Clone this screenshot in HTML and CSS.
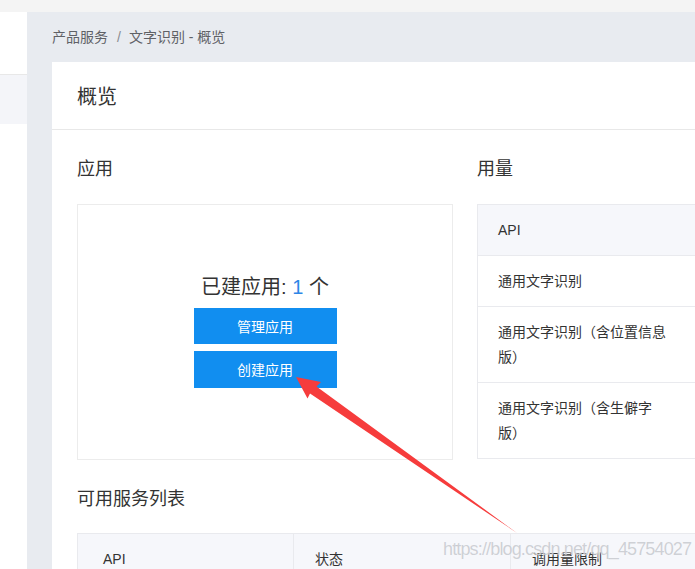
FILE: index.html
```html
<!DOCTYPE html>
<html lang="zh-CN">
<head>
<meta charset="utf-8">
<title>文字识别 - 概览</title>
<link rel="stylesheet" href="styles.css">
</head>
<body>
<div class="topbar"></div>
<div class="layout">
  <aside class="sidebar">
    <div class="side-top"></div>
    <div class="side-item"></div>
  </aside>
  <main class="main">
    <div class="breadcrumb"><span>产品服务</span><span class="sep">/</span><span>文字识别 - 概览</span></div>
    <section class="card">
      <div class="card-head">概览</div>
      <div class="card-body">
        <div class="cols">
          <div class="col">
            <h3 class="sec-title">应用</h3>
            <div class="app-box">
              <div class="app-count">已建应用: <span class="num">1</span> 个</div>
              <button class="btn">管理应用</button>
              <button class="btn">创建应用</button>
            </div>
          </div>
          <div class="col">
            <h3 class="sec-title">用量</h3>
            <table class="usage">
              <tr class="head"><td class="c1">API</td><td class="c2">调用量</td></tr>
              <tr><td class="c1">通用文字识别</td><td class="c2"></td></tr>
              <tr><td class="c1">通用文字识别（含位置信息版）</td><td class="c2"></td></tr>
              <tr><td class="c1">通用文字识别（含生僻字版）</td><td class="c2"></td></tr>
            </table>
          </div>
        </div>
        <h3 class="sec-title list-title">可用服务列表</h3>
        <table class="svc">
          <tr class="head"><td class="s1">API</td><td class="s2">状态</td><td class="s3">调用量限制</td><td class="s4"></td></tr>
        </table>
      </div>
    </section>
  </main>
</div>
<svg class="arrow" width="695" height="569" viewBox="0 0 695 569">
  <polygon points="296,377 321,382 316.5,386.5 517,533 310,393.5 307.5,398.5" fill="#f63c3c"/>
</svg>
<div class="watermark">https://blog.csdn.net/qq_45754027</div>
</body>
</html>
```
FILE: styles.css
```css
html, body {
  margin: 0;
  padding: 0;
  width: 695px;
  height: 569px;
  overflow: hidden;
}
body {
  position: relative;
  background: #ffffff;
  font-family: "Liberation Sans", "Noto Sans CJK SC", sans-serif;
  color: #333333;
  text-spacing-trim: space-all;
}
.topbar {
  height: 12px;
  background: #f4f4f4;
}
.layout {
  display: flex;
  height: 557px;
}
.sidebar {
  flex: none;
  width: 27px;
  background: #ffffff;
}
.side-top {
  height: 62px;
  border-bottom: 1px solid #e8e8e8;
}
.side-item {
  height: 49px;
  background: #f4f5f9;
}
.main {
  flex: none;
  width: 900px;
  background: #e8ebf0;
  padding-left: 25px;
}
.breadcrumb {
  height: 50px;
  line-height: 50px;
  font-size: 14px;
  color: #5f6166;
}
.breadcrumb .sep {
  margin: 0 8px 0 9px;
  color: #8a8c90;
}
.card {
  width: 860px;
  height: 520px;
  background: #ffffff;
}
.card-head {
  height: 65px;
  line-height: 67px;
  padding-top: 2px;
  border-bottom: 1px solid #e8e8e8;
  padding-left: 25px;
  font-size: 20px;
  color: #333333;
}
.card-body {
  padding: 0 25px;
}
.cols {
  display: flex;
  gap: 24px;
}
.col {
  width: 376px;
  flex: none;
}
.sec-title {
  margin: 24px 0 22px;
  padding-top: 2px;
  font-size: 18px;
  line-height: 26px;
  font-weight: normal;
  color: #333333;
}
.list-title {
  margin-bottom: 21px;
}
.app-box {
  box-sizing: border-box;
  height: 256px;
  border: 1px solid #ececec;
  display: flex;
  flex-direction: column;
  align-items: center;
  justify-content: center;
  padding-bottom: 4px;
}
.app-count {
  font-size: 20px;
  line-height: 28px;
  color: #333333;
  margin-bottom: 7px;
}
.app-count .num {
  color: #2d86e6;
}
.btn {
  width: 143px;
  height: 36px;
  border: none;
  background: #118ef0;
  color: #ffffff;
  font-family: "Noto Sans CJK SC", sans-serif;
  font-size: 14px;
  padding: 0;
  margin-bottom: 7px;
}
.btn:last-child {
  height: 37px;
  margin-bottom: 0;
}
table {
  border-collapse: collapse;
  table-layout: fixed;
}
td {
  border: 1px solid #e9eaee;
  font-size: 14px;
  line-height: 25px;
  color: #333333;
  vertical-align: top;
}
.head td {
  background: #f6f7fb;
}
.usage {
  width: 430px;
}
.usage td {
  padding: 13px 21px 12px 20px;
}
.usage .c1 {
  width: 176px;
}
.usage .c2 {
  width: 170px;
}
.svc {
  width: 860px;
}
.svc td {
  padding: 13px 21px 12px 21px;
}
.svc .s1 {
  width: 169px;
  padding-left: 25px;
}
.svc .s2 {
  width: 174px;
}
.svc .s3 {
  width: 174px;
}
.arrow {
  position: absolute;
  left: 0;
  top: 0;
  pointer-events: none;
}
.watermark {
  position: absolute;
  left: 443px;
  top: 538px;
  font-family: "Liberation Sans", sans-serif;
  font-size: 18px;
  line-height: 22px;
  letter-spacing: -0.85px;
  color: rgba(175, 178, 186, 0.6);
  text-shadow: 0 0 1px rgba(255, 255, 255, 0.8);
  white-space: nowrap;
}
```
